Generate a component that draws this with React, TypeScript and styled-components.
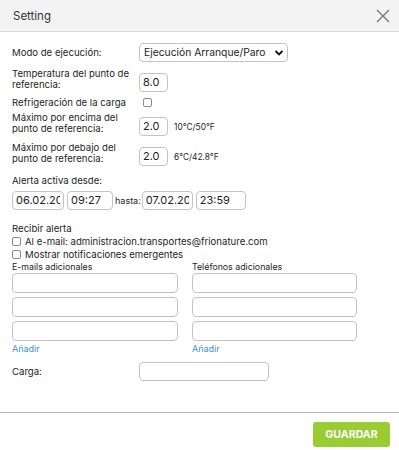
import React from 'react';
import styled, { createGlobalStyle } from 'styled-components';

const Global = createGlobalStyle`
  body {
    margin: 0;
    background: #fff;
    font-family: Inter, "Noto Sans", sans-serif;
    color: #1e1e1e;
  }
`;

const Dialog = styled.div`
  width: 399px;
  height: 450px;
  display: flex;
  flex-direction: column;
  background: #fff;
`;

const Header = styled.div`
  height: 31px;
  display: flex;
  align-items: center;
  justify-content: space-between;
  padding: 0 8px 0 13px;
  background: #f3f3f3;
  border-bottom: 1px solid #dcdcdc;
  font-size: 11.5px;
  color: #333;
`;

const Close = styled.div`
  width: 16px;
  height: 16px;
  display: flex;
  align-items: center;
  justify-content: center;
`;

const Body = styled.div`
  height: 381px;
  box-sizing: border-box;
  padding: 11px 12px 0 12px;
  font-size: 9.6px;
  line-height: 11px;
  border-bottom: 1px solid #b5b5b5;
`;

const Row = styled.div<{ $mt?: number; $center?: boolean }>`
  display: flex;
  align-items: ${p => (p.$center ? 'center' : 'flex-start')};
  margin-top: ${p => p.$mt ?? 0}px;
`;

const Label = styled.div`
  width: 127px;
  flex-shrink: 0;
`;

const Select = styled.div`
  width: 149px;
  height: 19px;
  box-sizing: border-box;
  border: 1px solid #c4c4c4;
  border-radius: 4px;
  display: flex;
  align-items: center;
  justify-content: space-between;
  padding: 0 3px 0 4px;
  font-size: 10.3px;
  white-space: nowrap;
`;

const Input = styled.div<{ $w: number; $mt?: number }>`
  width: ${p => p.$w}px;
  height: 19px;
  margin-top: ${p => p.$mt ?? 0}px;
  box-sizing: border-box;
  border: 1px solid #c4c4c4;
  border-radius: 4px;
  display: flex;
  align-items: center;
  padding: 0 3px;
  font-size: 11px;
  white-space: nowrap;
  flex-shrink: 0;
`;

const Value = styled.span`
  display: block;
  overflow: hidden;
  width: 100%;
`;

const Hint = styled.span`
  font-size: 8.4px;
  margin: 10px 0 0 6px;
`;

const Check = styled.span<{ $ml?: number }>`
  width: 9px;
  height: 9px;
  box-sizing: border-box;
  margin-left: ${p => p.$ml ?? 0}px;
  border: 1px solid #8a8a8a;
  border-radius: 2px;
  display: inline-block;
  flex-shrink: 0;
`;

const Text = styled.div<{ $mt?: number }>`
  margin-top: ${p => p.$mt ?? 0}px;
`;

const DateRow = styled.div`
  display: flex;
  align-items: center;
  gap: 3px;
  margin-top: 5px;
`;

const Hasta = styled.span`
  font-size: 9px;
  margin: 0 -2px 0 -1px;
`;

const Section = styled.div`
  margin-top: 12px;
  line-height: 13px;
`;

const CheckLine = styled.div`
  display: flex;
  align-items: center;
  gap: 4px;
`;

const Columns = styled.div`
  display: grid;
  grid-template-columns: 166px 165px;
  column-gap: 14px;
`;

const Col = styled.div`
  display: flex;
  flex-direction: column;
`;

const ColTitle = styled.div`
  font-size: 8.8px;
  line-height: 11px;
  margin-bottom: 1px;
`;

const Box = styled.div`
  height: 20px;
  margin-bottom: 4px;
  box-sizing: border-box;
  border: 1px solid #c4c4c4;
  border-radius: 4px;
`;

const Link = styled.div`
  color: #3d8fe8;
  font-size: 9px;
  line-height: 11px;
  margin-top: -2px;
`;

const CargaRow = styled.div`
  display: flex;
  align-items: center;
  margin-top: 8px;
`;

const Footer = styled.div`
  flex: 1;
  display: flex;
  align-items: flex-start;
  justify-content: flex-end;
  padding: 9px 9px 0 0;
`;

const Button = styled.div`
  width: 77px;
  height: 25px;
  border-radius: 3px;
  background: #99cc33;
  color: #fff;
  font-weight: 700;
  font-size: 10.6px;
  display: flex;
  align-items: center;
  justify-content: center;
`;

export default function App() {
  return (
    <>
      <Global />
      <Dialog>
        <Header>
          <span>Setting</span>
          <Close>
            <svg width="14" height="14" viewBox="0 0 14 14">
              <path d="M1 1L13 13M13 1L1 13" stroke="#777" strokeWidth="1.4" />
            </svg>
          </Close>
        </Header>
        <Body>
          <Row $center>
            <Label>Modo de ejecución:</Label>
            <Select>
              <span>Ejecución Arranque/Paro</span>
              <svg width="10" height="8" viewBox="0 0 10 8">
                <path d="M1.5 2L5 5.5L8.5 2" stroke="#111" strokeWidth="1.8" fill="none" />
              </svg>
            </Select>
          </Row>
          <Row $mt={6}>
            <Label>Temperatura del punto de<br />referencia:</Label>
            <Input $w={29} $mt={5}>8.0</Input>
          </Row>
          <Row $mt={5} $center>
            <Label>Refrigeración de la carga</Label>
            <Check $ml={4} />
          </Row>
          <Row $mt={4}>
            <Label>Máximo por encima del<br />punto de referencia:</Label>
            <Input $w={29} $mt={5}>2.0</Input>
            <Hint>10°C/50°F</Hint>
          </Row>
          <Row $mt={6}>
            <Label>Máximo por debajo del<br />punto de referencia:</Label>
            <Input $w={29} $mt={5}>2.0</Input>
            <Hint>6°C/42.8°F</Hint>
          </Row>
          <Text $mt={9}>Alerta activa desde:</Text>
          <DateRow>
            <Input $w={52}><Value>06.02.2023</Value></Input>
            <Input $w={46}><Value>09:27</Value></Input>
            <Hasta>hasta:</Hasta>
            <Input $w={51}><Value>07.02.2023</Value></Input>
            <Input $w={50}><Value>23:59</Value></Input>
          </DateRow>
          <Section>
            <div>Recibir alerta</div>
            <CheckLine><Check />Al e-mail: administracion.transportes@frionature.com</CheckLine>
            <CheckLine><Check />Mostrar notificaciones emergentes</CheckLine>
            <Columns>
              <Col>
                <ColTitle>E-mails adicionales</ColTitle>
                <Box />
                <Box />
                <Box />
                <Link>Añadir</Link>
              </Col>
              <Col>
                <ColTitle>Teléfonos adicionales</ColTitle>
                <Box />
                <Box />
                <Box />
                <Link>Añadir</Link>
              </Col>
            </Columns>
          </Section>
          <CargaRow>
            <Label>Carga:</Label>
            <Input $w={130} />
          </CargaRow>
        </Body>
        <Footer>
          <Button>GUARDAR</Button>
        </Footer>
      </Dialog>
    </>
  );
}
